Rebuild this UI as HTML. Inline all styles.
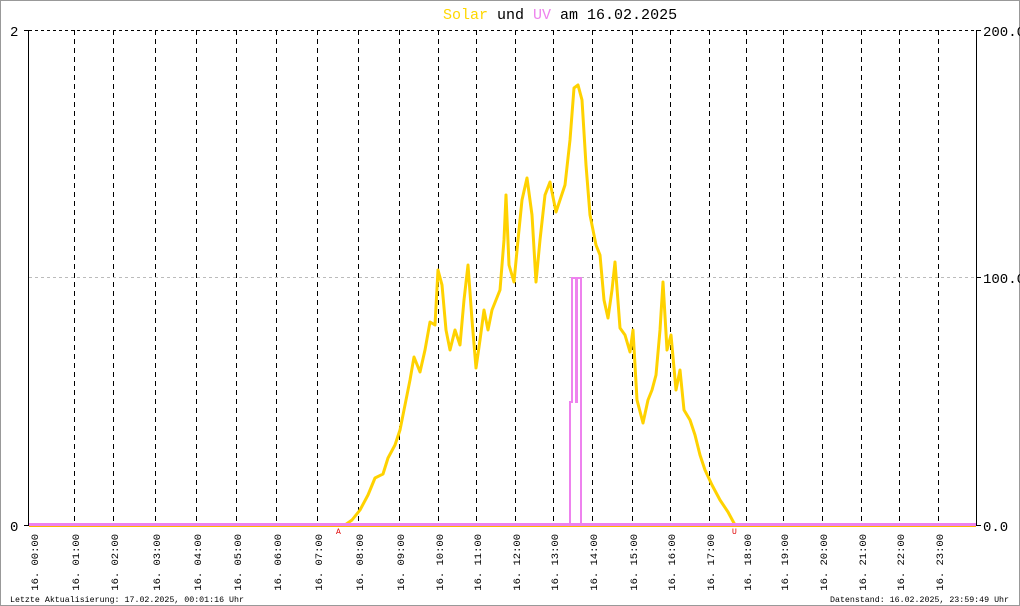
<!DOCTYPE html>
<html><head><meta charset="utf-8"><style>
html,body{margin:0;padding:0;background:#fff}
svg{display:block}
text{font-family:"Liberation Mono","DejaVu Sans Mono",monospace}
</style></head><body>
<svg width="1020" height="606" viewBox="0 0 1020 606" xmlns="http://www.w3.org/2000/svg">
<rect x="0.5" y="0.5" width="1019" height="605" fill="#fff" stroke="#999" stroke-width="1"/>
<text x="443" y="19" font-size="15" fill="#000"><tspan fill="#ffd700">Solar</tspan> und <tspan fill="#ee82ee">UV</tspan> am 16.02.2025</text>
<g stroke="#000" stroke-width="1" stroke-dasharray="5,4">
<line x1="74.5" y1="30" x2="74.5" y2="525"/><line x1="113.5" y1="30" x2="113.5" y2="525"/><line x1="155.5" y1="30" x2="155.5" y2="525"/><line x1="196.5" y1="30" x2="196.5" y2="525"/><line x1="236.5" y1="30" x2="236.5" y2="525"/><line x1="276.5" y1="30" x2="276.5" y2="525"/><line x1="317.5" y1="30" x2="317.5" y2="525"/><line x1="358.5" y1="30" x2="358.5" y2="525"/><line x1="399.5" y1="30" x2="399.5" y2="525"/><line x1="438.5" y1="30" x2="438.5" y2="525"/><line x1="476.5" y1="30" x2="476.5" y2="525"/><line x1="515.5" y1="30" x2="515.5" y2="525"/><line x1="553.5" y1="30" x2="553.5" y2="525"/><line x1="592.5" y1="30" x2="592.5" y2="525"/><line x1="632.5" y1="30" x2="632.5" y2="525"/><line x1="670.5" y1="30" x2="670.5" y2="525"/><line x1="709.5" y1="30" x2="709.5" y2="525"/><line x1="746.5" y1="30" x2="746.5" y2="525"/><line x1="783.5" y1="30" x2="783.5" y2="525"/><line x1="822.5" y1="30" x2="822.5" y2="525"/><line x1="861.5" y1="30" x2="861.5" y2="525"/><line x1="899.5" y1="30" x2="899.5" y2="525"/><line x1="938.5" y1="30" x2="938.5" y2="525"/>
</g>
<line x1="29" y1="30.5" x2="976" y2="30.5" stroke="#000" stroke-dasharray="3,3"/>
<line x1="29" y1="277.5" x2="976" y2="277.5" stroke="#bbb" stroke-dasharray="3,3"/>
<line x1="28.5" y1="30" x2="28.5" y2="526" stroke="#000"/>
<line x1="976.5" y1="30" x2="976.5" y2="526" stroke="#000"/>
<line x1="24" y1="30.5" x2="29" y2="30.5" stroke="#000"/><line x1="24" y1="525.5" x2="29" y2="525.5" stroke="#000"/>
<line x1="976" y1="30.5" x2="981" y2="30.5" stroke="#000"/><line x1="976" y1="277.5" x2="981" y2="277.5" stroke="#000"/><line x1="976" y1="525.5" x2="981" y2="525.5" stroke="#000"/>
<text x="10" y="36" font-size="14">2</text>
<text x="10" y="531" font-size="14">0</text>
<text x="983" y="36" font-size="14">200.0</text>
<text x="983" y="283" font-size="14">100.0</text>
<text x="983" y="531" font-size="14">0.0</text>
<line x1="29" y1="526.5" x2="976" y2="526.5" stroke="#ffb400" stroke-width="1"/>
<polyline fill="none" stroke="#ffd200" stroke-width="3" stroke-linejoin="round" points="345,525 352,520 360,510 368,495 375,478 383,474 388,458 395,445 400,430 405,405 410,380 414,357 420,372 425,350 430,322 435,325 438,270 442,285 446,330 450,350 455,330 460,345 464,300 468,265 472,320 476,368 480,340 484,310 488,330 492,310 496,300 500,290 504,240 506,195 509,265 514,282 518,240 522,200 527,178 532,215 536,282 540,240 545,195 550,182 556,212 560,200 565,185 570,140 574,88 578,85 582,100 586,165 590,215 596,245 600,255 604,300 608,318 612,290 615,262 620,328 625,335 630,352 633,330 637,400 643,423 648,400 652,390 656,375 660,330 663,282 667,350 671,335 676,390 680,370 684,410 690,420 695,435 700,455 705,470 712,485 720,500 728,512 735,525"/>
<polyline fill="none" stroke="#ee82ee" stroke-width="2" points="29,524.5 570,524.5 570,402 572,402 572,278 576,278 576,402 577,402 577,278 581,278 581,524.5 976,524.5"/>
<line x1="29" y1="524.5" x2="976" y2="524.5" stroke="#ee82ee" stroke-width="3"/>
<text x="336" y="534" font-size="8" fill="#e00000">A</text>
<text x="732" y="534" font-size="8" fill="#e00000">U</text>
<g font-size="10.5" fill="#000">
<text transform="translate(38,534) rotate(-90)" text-anchor="end">16. 00:00</text>
<text transform="translate(79,534) rotate(-90)" text-anchor="end">16. 01:00</text>
<text transform="translate(118,534) rotate(-90)" text-anchor="end">16. 02:00</text>
<text transform="translate(160,534) rotate(-90)" text-anchor="end">16. 03:00</text>
<text transform="translate(201,534) rotate(-90)" text-anchor="end">16. 04:00</text>
<text transform="translate(241,534) rotate(-90)" text-anchor="end">16. 05:00</text>
<text transform="translate(281,534) rotate(-90)" text-anchor="end">16. 06:00</text>
<text transform="translate(322,534) rotate(-90)" text-anchor="end">16. 07:00</text>
<text transform="translate(363,534) rotate(-90)" text-anchor="end">16. 08:00</text>
<text transform="translate(404,534) rotate(-90)" text-anchor="end">16. 09:00</text>
<text transform="translate(443,534) rotate(-90)" text-anchor="end">16. 10:00</text>
<text transform="translate(481,534) rotate(-90)" text-anchor="end">16. 11:00</text>
<text transform="translate(520,534) rotate(-90)" text-anchor="end">16. 12:00</text>
<text transform="translate(558,534) rotate(-90)" text-anchor="end">16. 13:00</text>
<text transform="translate(597,534) rotate(-90)" text-anchor="end">16. 14:00</text>
<text transform="translate(637,534) rotate(-90)" text-anchor="end">16. 15:00</text>
<text transform="translate(675,534) rotate(-90)" text-anchor="end">16. 16:00</text>
<text transform="translate(714,534) rotate(-90)" text-anchor="end">16. 17:00</text>
<text transform="translate(751,534) rotate(-90)" text-anchor="end">16. 18:00</text>
<text transform="translate(788,534) rotate(-90)" text-anchor="end">16. 19:00</text>
<text transform="translate(827,534) rotate(-90)" text-anchor="end">16. 20:00</text>
<text transform="translate(866,534) rotate(-90)" text-anchor="end">16. 21:00</text>
<text transform="translate(904,534) rotate(-90)" text-anchor="end">16. 22:00</text>
<text transform="translate(943,534) rotate(-90)" text-anchor="end">16. 23:00</text>
</g>
<text x="10" y="602" font-size="8.3" textLength="234">Letzte Aktualisierung: 17.02.2025, 00:01:16 Uhr</text>
<text x="830" y="602" font-size="8.3" textLength="179">Datenstand: 16.02.2025, 23:59:49 Uhr</text>
</svg>
</body></html>
